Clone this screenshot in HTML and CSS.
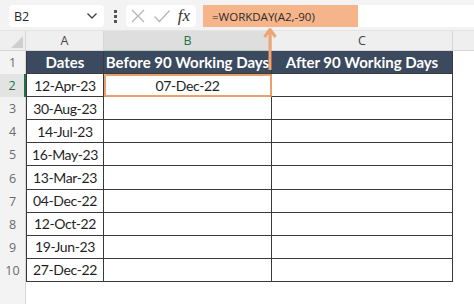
FILE: index.html
```html
<!DOCTYPE html>
<html lang="en">
<head>
    <meta charset="UTF-8">
    <title>WORKDAY sheet</title>
    <link rel="stylesheet" href="styles.css">
</head>
<body>
<div class="window">
    <div class="toolbar">
        <div class="name-box">
            <span>B2</span>
            <svg class="chevron" width="12" height="8" viewBox="0 0 12 8"><path d="M1.5 1.5 L6 6 L10.5 1.5" fill="none" stroke="#444" stroke-width="1.4"/></svg>
        </div>
        <div class="dots"><i></i><i></i><i></i></div>
        <div class="fx-box">
            <svg width="16" height="16" viewBox="0 0 16 16"><path d="M2 2 L14 14 M14 2 L2 14" stroke="#b5b5b5" stroke-width="1.3"/></svg>
            <svg width="18" height="16" viewBox="0 0 18 16"><path d="M1.5 8.5 L6.5 13.5 L16.5 2.5" fill="none" stroke="#b5b5b5" stroke-width="1.3"/></svg>
            <span class="fx">fx</span>
        </div>
        <div class="formula">
            <span class="formula-text">=WORKDAY(A2,-90)</span>
        </div>
    </div>

    <div class="sheet">
        <div class="corner"><svg width="12" height="12" viewBox="0 0 12 12"><path d="M12 0 L12 12 L0 12 Z" fill="#cfcfcf"/></svg></div>
        <div class="col-head">A</div>
        <div class="col-head active">B</div>
        <div class="col-head">C</div>
        <div class="col-head last"></div>

        <div class="row-head">1</div>
        <div class="cell title first">Dates</div>
        <div class="cell title">Before 90 Working Days</div>
        <div class="cell title">After 90 Working Days</div>
        <div class="blank"></div>

        <div class="row-head active">2</div>
        <div class="cell first">12-Apr-23</div>
        <div class="cell selected">07-Dec-22</div>
        <div class="cell"></div>
        <div class="blank"></div>

        <div class="row-head">3</div>
        <div class="cell first">30-Aug-23</div>
        <div class="cell"></div>
        <div class="cell"></div>
        <div class="blank"></div>

        <div class="row-head">4</div>
        <div class="cell first">14-Jul-23</div>
        <div class="cell"></div>
        <div class="cell"></div>
        <div class="blank"></div>

        <div class="row-head">5</div>
        <div class="cell first">16-May-23</div>
        <div class="cell"></div>
        <div class="cell"></div>
        <div class="blank"></div>

        <div class="row-head">6</div>
        <div class="cell first">13-Mar-23</div>
        <div class="cell"></div>
        <div class="cell"></div>
        <div class="blank"></div>

        <div class="row-head">7</div>
        <div class="cell first">04-Dec-22</div>
        <div class="cell"></div>
        <div class="cell"></div>
        <div class="blank"></div>

        <div class="row-head">8</div>
        <div class="cell first">12-Oct-22</div>
        <div class="cell"></div>
        <div class="cell"></div>
        <div class="blank"></div>

        <div class="row-head">9</div>
        <div class="cell first">19-Jun-23</div>
        <div class="cell"></div>
        <div class="cell"></div>
        <div class="blank"></div>

        <div class="row-head">10</div>
        <div class="cell first">27-Dec-22</div>
        <div class="cell"></div>
        <div class="cell"></div>
        <div class="blank"></div>

        <div class="row-head"></div>
        <div class="blank"></div>
        <div class="blank"></div>
        <div class="blank"></div>
        <div class="blank"></div>
    </div>

    <svg class="arrow" width="16" height="44" viewBox="0 0 16 44">
        <path d="M8 4 L8 44" stroke="#f0a474" stroke-width="3"/>
        <path d="M2.5 11 L8 3.5 L13.5 11" fill="none" stroke="#f0a474" stroke-width="3" stroke-linejoin="round"/>
    </svg>
</div>
</body>
</html>
```

FILE: styles.css
```css
body {
    margin: 0;
    background: #ffffff;
}

.window {
    position: relative;
    width: 474px;
    height: 304px;
    overflow: hidden;
    font-family: "Open Sans", "Noto Sans", sans-serif;
}

.toolbar {
    height: 31px;
    box-sizing: border-box;
    padding: 5px 0 3px 9px;
    display: flex;
    align-items: stretch;
    background: #f3f3f3;
    border-bottom: 1px solid #e4e4e4;
}

.name-box {
    width: 95px;
    box-sizing: border-box;
    padding: 0 6px 0 5px;
    display: flex;
    align-items: center;
    justify-content: space-between;
    background: #ffffff;
    border-radius: 4px;
    font-size: 12.5px;
    color: #262626;
}

.dots {
    width: 22px;
    display: flex;
    flex-direction: column;
    align-items: center;
    justify-content: center;
    gap: 2px;
}

.dots i {
    width: 3px;
    height: 3px;
    background: #555;
}

.fx-box {
    width: 70px;
    box-sizing: border-box;
    padding: 0 6px 0 4px;
    display: flex;
    align-items: center;
    justify-content: space-between;
    background: #ffffff;
    border-radius: 4px;
}

.fx {
    font-family: "Liberation Serif", serif;
    font-style: italic;
    font-size: 17px;
    color: #333;
}

.formula {
    flex: 1;
    margin-left: 7px;
    display: flex;
    background: #ffffff;
}

.formula-text {
    width: 155px;
    box-sizing: border-box;
    padding-left: 9px;
    display: flex;
    align-items: center;
    background: #f5b48a;
    font-size: 11.5px;
    color: #2b2b2b;
}

.sheet {
    display: grid;
    grid-template-columns: 26px 78px 168px 181px 1fr;
    grid-template-rows: 20px repeat(10, 23.1px) 1fr;
    height: 273px;
    font-family: Lato, "Liberation Sans", sans-serif;
}

.corner {
    display: flex;
    align-items: flex-end;
    justify-content: flex-end;
    padding: 0 2px 2px 0;
    background: #efefef;
    border-right: 1px solid #d6d6d6;
    border-bottom: 1px solid #d6d6d6;
}

.col-head {
    display: flex;
    align-items: center;
    justify-content: center;
    background: #efefef;
    border-right: 1px solid #d6d6d6;
    border-bottom: 1px solid #d6d6d6;
    font-family: "Open Sans", sans-serif;
    font-size: 12.5px;
    color: #444;
}

.col-head.active {
    background: #dedede;
    color: #217346;
    border-bottom: 1px solid #b7c9bd;
}

.col-head.last {
    border-right: none;
}

.row-head {
    display: flex;
    align-items: center;
    justify-content: center;
    background: #f3f3f3;
    border-right: 1px solid #d6d6d6;
    font-family: "Open Sans", sans-serif;
    font-size: 12.5px;
    color: #6a6a6a;
}

.row-head.active {
    background: #e3e3e3;
    color: #217346;
    border-right: 2px solid #217346;
}

.cell {
    display: flex;
    align-items: center;
    justify-content: center;
    background: #ffffff;
    border-right: 1px solid #3a3a3a;
    border-bottom: 1px solid #3a3a3a;
    box-shadow: 0 1px 0 #c9c9c9;
    font-size: 14px;
    letter-spacing: -0.4px;
    color: #1f1f1f;
}

.cell.first {
    border-left: 1px solid #3a3a3a;
}

.cell.title {
    background: #3b4a5e;
    color: #ffffff;
    font-size: 15px;
    letter-spacing: 0;
    font-weight: bold;
}

.cell.selected {
    outline: 2px solid #e9a06f;
    outline-offset: -2px;
    border-radius: 2px;
}

.blank {
    background: #ffffff;
}

.arrow {
    position: absolute;
    left: 262px;
    top: 26px;
}
```
